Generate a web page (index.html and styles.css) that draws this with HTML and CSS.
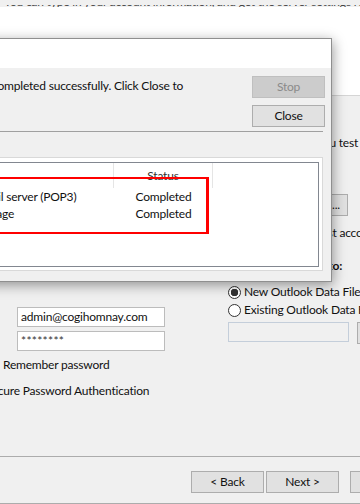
FILE: index.html
```html
<!DOCTYPE html>
<html lang="en">
<head>
    <meta charset="UTF-8">
    <meta name="viewport" content="width=device-width, initial-scale=1.0">
    <title>Add Account</title>
    <link rel="stylesheet" href="styles.css">
</head>
<body>
    <div class="window">
        <div class="top-strip">
            <div class="strip-clip"><span>You can type in your account information, and get the server settings ready for your mail typing</span></div>
        </div>
        <div class="window-header"></div>

        <div class="window-body">
            <div class="col-left">
                <h3>User Information</h3>
                <div class="field"><label>Your Name:</label><div class="textbox">Cogi</div></div>
                <div class="field"><label>Email Address:</label><div class="textbox">admin@cogihomnay.com</div></div>
                <h3>Server Information</h3>
                <div class="field"><label>Account Type:</label><div class="textbox">POP3</div></div>
                <div class="field"><label>Incoming mail server:</label><div class="textbox">mail.cogihomnay.com</div></div>
                <div class="field"><label>Outgoing mail server:</label><div class="textbox">mail.cogihomnay.com</div></div>
                <h3>Logon Information</h3>
                <div class="field"><label>User Name:</label><div class="textbox">admin@cogihomnay.com</div></div>
                <div class="field"><label>Password:</label><div class="textbox password">********</div></div>
                <div class="check remember"><span class="box checked"></span>Remember password</div>
                <div class="check spa"><span class="box"></span>Require logon using Secure Password Authentication</div>
            </div>

            <div class="col-right">
                <p class="note">We recommend that you test your account to ensure that the entries are correct.</p>
                <div class="btn test-btn">Test Account Settings ...</div>
                <div class="check auto"><span class="box checked"></span>Automatically test account settings when Next is clicked</div>
                <h3 class="deliver">Deliver new messages to:</h3>
                <div class="radio"><span class="dot on"></span>New Outlook Data File</div>
                <div class="radio"><span class="dot"></span>Existing Outlook Data File</div>
                <div class="path-row">
                    <div class="textbox disabled"></div>
                    <div class="btn">Browse</div>
                </div>
            </div>
        </div>

        <div class="window-footer">
            <div class="btn">&lt; Back</div>
            <div class="btn next">Next &gt;</div>
            <div class="btn cancel">Cancel</div>
        </div>
    </div>

    <!-- Test Account Settings dialog -->
    <div class="dialog">
        <div class="dialog-title">Test Account Settings</div>
        <div class="dialog-body">
            <div class="dialog-top">
                <p class="message">Congratulations! All tests completed successfully. Click Close to continue.</p>
                <div class="dialog-actions">
                    <div class="btn disabled">Stop</div>
                    <div class="btn">Close</div>
                </div>
            </div>
            <div class="sep"></div>
            <div class="tabs">
                <div class="tab active">Tasks</div>
                <div class="tab">Errors</div>
            </div>
            <div class="tab-page">
                <div class="listview">
                    <div class="lv-row lv-head">
                        <div class="lv-cell task">Tasks</div>
                        <div class="lv-cell status">Status</div>
                    </div>
                    <div class="lv-row">
                        <div class="lv-cell task">Log onto incoming mail server (POP3)</div>
                        <div class="lv-cell status">Completed</div>
                    </div>
                    <div class="lv-row">
                        <div class="lv-cell task">Send test e-mail message</div>
                        <div class="lv-cell status">Completed</div>
                    </div>
                </div>
            </div>
        </div>
    </div>

    <!-- red highlight drawn over the result list -->
    <div class="callout"></div>
</body>
</html>
```

FILE: styles.css
```css
* {
    box-sizing: border-box;
}
html, body {
    margin: 0;
    padding: 0;
}
body {
    position: relative;
    width: 360px;
    height: 504px;
    overflow: hidden;
    background-color: #f0f0f0;
    font-family: Lato, "Noto Sans", sans-serif;
    font-size: 12px;
    line-height: 16px;
    letter-spacing: -0.2px;
    color: #111;
}
h3 {
    margin: 0;
    font-size: 12px;
    font-weight: 700;
    line-height: 16px;
}
p {
    margin: 0;
}

/* Add Account window (behind) */
.window {
    width: 640px;
    margin-left: -210px;
}
.top-strip {
    height: 7px;
    padding-top: 5px;
    overflow: hidden;
}
.strip-clip {
    height: 2px;
    overflow: hidden;
    padding-left: 214px;
    white-space: nowrap;
    color: #444;
}
.strip-clip span {
    display: block;
    transform: translateY(-11px);
}
.window-header {
    height: 89px;
    background-color: #fff;
    border-bottom: 1px solid #d5d5d5;
}
.window-body {
    display: flex;
    height: 360px;
}
.col-left {
    flex: none;
    width: 438px;
    padding: 13px 0 0 76px;
}
.col-left h3 {
    margin: 10px 0 6px;
}
.col-left h3:first-child {
    margin-top: 0;
}
.field {
    display: flex;
    align-items: center;
    height: 20px;
    margin-bottom: 4px;
}
.field label {
    width: 151px;
}
.textbox {
    width: 148px;
    height: 20px;
    padding: 0 3px;
    line-height: 18px;
    background-color: #fff;
    border: 1px solid #bcbcbc;
    white-space: nowrap;
}
.textbox.password {
    color: #333;
    letter-spacing: 0.3px;
}
.textbox.disabled {
    width: 300px;
    background-color: #f0f0f0;
    border-color: #c4ceda;
}
.check {
    display: flex;
    align-items: center;
    height: 16px;
    white-space: nowrap;
}
.box {
    flex: none;
    width: 13px;
    height: 13px;
    margin-right: 4px;
    background-color: #fff;
    border: 1px solid #333;
}
.remember {
    margin: 6px 0 0 120px;
}
.spa {
    margin-top: 10px;
}
.col-right {
    flex: none;
    width: 202px;
    padding-top: 39px;
}
.note {
    margin-left: -18px;
    white-space: nowrap;
}
.btn {
    display: flex;
    align-items: center;
    justify-content: center;
    flex: none;
    width: 73px;
    height: 22px;
    background-color: #e1e1e1;
    border: 1px solid #adadad;
    color: #111;
    white-space: nowrap;
}
.btn.disabled {
    background-color: #cccccc;
    border-color: #bfbfbf;
    color: #8a8a8a;
}
.test-btn {
    width: 120px;
    margin-top: 43px;
    justify-content: flex-end;
    padding-right: 7px;
}
.auto {
    margin-top: 9px;
}
.deliver {
    margin: 17px 0 0 -16px;
    white-space: nowrap;
}
.radio {
    display: flex;
    align-items: center;
    height: 16px;
    margin-top: 2px;
    white-space: nowrap;
}
.deliver + .radio {
    margin-top: 10px;
}
.dot {
    flex: none;
    width: 13px;
    height: 13px;
    margin-right: 3px;
    border: 1px solid #333;
    border-radius: 50%;
    background-color: #fff;
}
.dot.on {
    background: radial-gradient(circle, #333 0 3.5px, #fff 4px);
}
.path-row {
    display: flex;
    gap: 8px;
    margin-top: 4px;
}
.window-footer {
    display: flex;
    padding: 14px 0 10px 401px;
    border-top: 1px solid #acacac;
    border-bottom: 1px solid #acacac;
}
.window-footer .next {
    margin-left: 2px;
}
.window-footer .cancel {
    margin-left: 11px;
}

/* Test Account Settings dialog */
.dialog {
    position: absolute;
    top: 38px;
    left: -142px;
    width: 474px;
    height: 244px;
    background-color: #f0f0f0;
    border: 1px solid #8f8f8f;
    box-shadow: 1px 3px 12px rgba(0, 0, 0, 0.4);
}
.dialog-title {
    height: 29px;
    padding-left: 12px;
    line-height: 29px;
    background-color: #fff;
}
.dialog-body {
    padding: 8px 6px 10px 4px;
}
.dialog-top {
    display: flex;
    height: 51px;
}
.message {
    flex: 1;
    margin: 2px 37px 0 0;
}
.dialog-actions {
    display: flex;
    flex-direction: column;
    gap: 7px;
}
.sep {
    margin: 4px 2px 0 0;
    border-top: 1px solid #a0a0a0;
}
.tabs {
    display: flex;
    align-items: flex-end;
    height: 25px;
}
.tab {
    padding: 2px 8px;
}
.tab-page {
    height: 114px;
    margin-right: 2px;
    padding: 4px 3px 3px 4px;
    background-color: #fff;
    border: 1px solid #d9d9d9;
}
.listview {
    height: 100%;
    background-color: #fff;
    border: 1px solid #828790;
}
.lv-row {
    display: flex;
    height: 17px;
    line-height: 17px;
    white-space: nowrap;
}
.lv-head {
    height: 25px;
    line-height: 25px;
    color: #333;
}
.lv-cell.task {
    width: 245px;
    padding-left: 17px;
    overflow: hidden;
}
.lv-cell.status {
    width: 99px;
    text-align: center;
}
.lv-head .lv-cell {
    border-right: 1px solid #e5e5e5;
}

.callout {
    position: absolute;
    top: 177px;
    left: -20px;
    width: 229px;
    height: 57px;
    border: 2px solid #ff0000;
    border-right-width: 3px;
}
```
